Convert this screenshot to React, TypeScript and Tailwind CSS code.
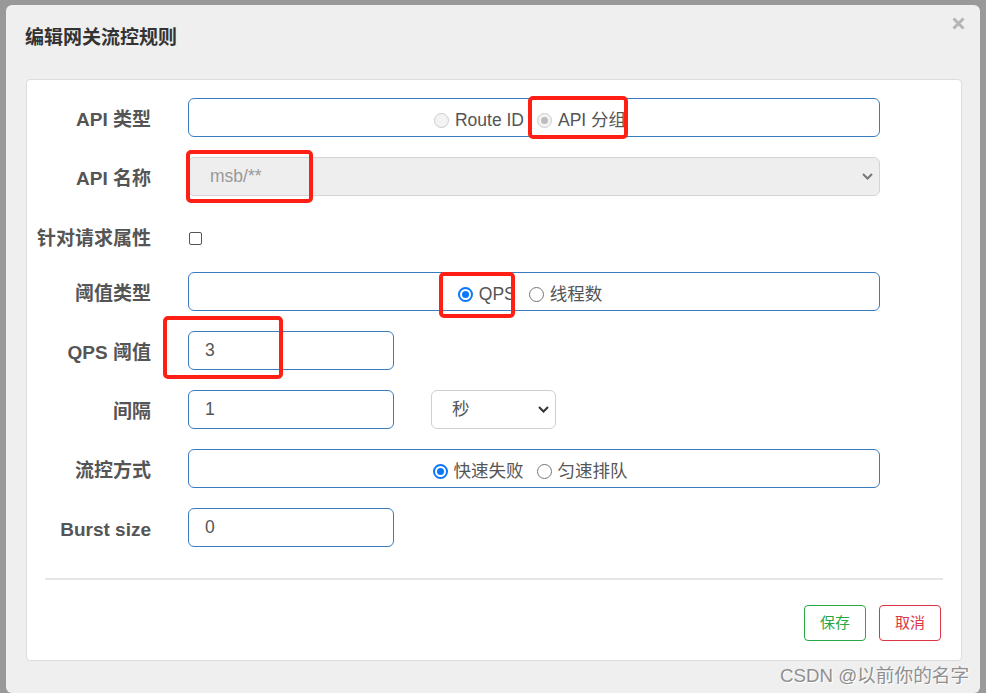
const font = "font-['Liberation_Sans','Noto_Sans_CJK_SC',sans-serif]"

function Radio({ checked, disabled }: { checked?: boolean; disabled?: boolean }) {
  if (disabled)
    return (
      <span className="flex h-[15px] w-[15px] items-center justify-center rounded-full border border-[#cbcbcb] bg-[#f3f3f3]">
        {checked && <span className="h-[7px] w-[7px] rounded-full bg-[#bdbdbd]" />}
      </span>
    )
  if (checked)
    return (
      <span className="flex h-[15px] w-[15px] items-center justify-center rounded-full border-2 border-[#0b77ff] bg-white">
        <span className="h-[7px] w-[7px] rounded-full bg-[#0b77ff]" />
      </span>
    )
  return <span className="h-[15px] w-[15px] rounded-full border-[1.5px] border-[#767676] bg-white" />
}

function Chevron({ color }: { color: string }) {
  return (
    <svg width="11" height="7" viewBox="0 0 11 7" fill="none">
      <path d="M1 1l4.5 4.5L10 1" stroke={color} strokeWidth="2" />
    </svg>
  )
}

function RadioGroup({ items }: { items: { label: string; checked?: boolean; disabled?: boolean }[] }) {
  return (
    <div className="flex h-[39px] w-[692px] items-center justify-center gap-[13px] rounded-[6px] border border-[#3a7dbf] bg-white pr-[8px] pt-[6px]">
      {items.map((it) => (
        <span key={it.label} className="flex items-center gap-[6px]">
          <Radio checked={it.checked} disabled={it.disabled} />
          <span className="text-[17.5px] text-[#555]">{it.label}</span>
        </span>
      ))}
    </div>
  )
}

function Row({ label, children, className = "" }: { label: string; children: React.ReactNode; className?: string }) {
  return (
    <div className={`flex h-[39px] items-center ${className}`}>
      <div className="w-[124px] pt-[5px] text-right text-[19px] font-bold text-[#555]">{label}</div>
      <div className="ml-[37px] flex items-center">{children}</div>
    </div>
  )
}

function TextBox({ value }: { value: string }) {
  return (
    <div className="flex h-[39px] w-[206px] items-center rounded-[6px] border border-[#3a7dbf] bg-white pl-[16px] text-[17.5px] text-[#555]">
      {value}
    </div>
  )
}

function Mark({ className }: { className: string }) {
  return <div className={`pointer-events-none absolute rounded-[5px] border-[4px] border-[#ff1f14] ${className}`} />
}

export default function App() {
  return (
    <div className={`relative h-[693px] w-[986px] overflow-hidden bg-[#999] pl-[6px] pt-[5px] ${font}`}>
      <div className="relative h-[688px] w-[974px] rounded-[6px] bg-[#efefef]">
        <div className="flex h-[74px] items-start justify-between pl-[19px] pr-[15px] pt-[20px]">
          <h2 className="text-[19px] font-bold leading-[26px] text-[#333]">编辑网关流控规则</h2>
          <svg width="13" height="13" viewBox="0 0 13 13" className="mt-[-8px]">
            <path d="M1.5 1.5l10 10M11.5 1.5l-10 10" stroke="#b5b5b5" strokeWidth="3" />
          </svg>
        </div>

        <div className="ml-[20px] h-[582px] w-[936px] rounded-[4px] border border-[#dcdcdc] bg-white">
          <div className="flex flex-col pt-[18px]">
            <Row label="API 类型">
              <RadioGroup
                items={[
                  { label: "Route ID", disabled: true },
                  { label: "API 分组", disabled: true, checked: true },
                ]}
              />
            </Row>
            <Row label="API 名称" className="mt-[20px]">
              <div className="flex h-[39px] w-[692px] items-center justify-between rounded-[6px] border border-[#d4d4d4] bg-[#eee] pl-[21px] pr-[6px] text-[17.5px] text-[#999]">
                <span>msb/**</span>
                <Chevron color="#777" />
              </div>
            </Row>
            <div className="mt-[20px] flex h-[44px] items-center">
              <div className="w-[124px] pt-[2px] text-right text-[19px] font-bold text-[#555]">针对请求属性</div>
              <span className="ml-[38px] h-[13px] w-[13px] rounded-[2px] border-[1.5px] border-[#555] bg-white" />
            </div>
            <Row label="阈值类型" className="mt-[12px]">
              <RadioGroup items={[{ label: "QPS", checked: true }, { label: "线程数" }]} />
            </Row>
            <Row label="QPS 阈值" className="mt-[20px]">
              <TextBox value="3" />
            </Row>
            <Row label="间隔" className="mt-[20px]">
              <TextBox value="1" />
              <div className="ml-[37px] flex h-[39px] w-[125px] items-center justify-between rounded-[6px] border border-[#cfcfcf] bg-white pl-[20px] pr-[6px] text-[17.5px] text-[#555]">
                <span>秒</span>
                <Chevron color="#333" />
              </div>
            </Row>
            <Row label="流控方式" className="mt-[20px]">
              <RadioGroup items={[{ label: "快速失败", checked: true }, { label: "匀速排队" }]} />
            </Row>
            <Row label="Burst size" className="mt-[20px]">
              <TextBox value="0" />
            </Row>

            <div className="mx-[18px] mt-[31px] h-[2px] bg-[#e6e6e6]" />

            <div className="mt-[25px] flex justify-end gap-[13px] pr-[20px]">
              <button className="h-[36px] w-[62px] rounded-[4px] border border-[#28a745] bg-white text-[15px] text-[#28a745]">
                保存
              </button>
              <button className="h-[36px] w-[62px] rounded-[4px] border border-[#dc3545] bg-white text-[15px] text-[#dc3545]">
                取消
              </button>
            </div>
          </div>
        </div>
      </div>

      <Mark className="left-[528px] top-[96px] h-[43px] w-[100px]" />
      <Mark className="left-[186px] top-[150px] h-[53px] w-[127px]" />
      <Mark className="left-[439px] top-[272px] h-[46px] w-[76px]" />
      <Mark className="left-[163px] top-[316px] h-[63px] w-[120px]" />

      <div className="absolute left-[780px] top-[662px] text-[18.7px] text-[#8f8f8f] [text-shadow:1px_1px_0_#fff]">
        CSDN @以前你的名字
      </div>
    </div>
  )
}
